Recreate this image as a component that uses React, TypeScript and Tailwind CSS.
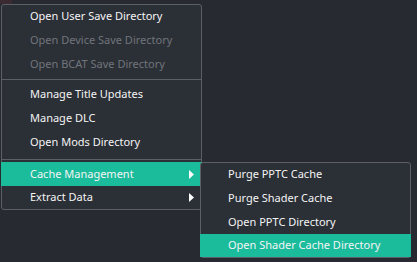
const font = { fontFamily: '"Noto Sans", "Open Sans", sans-serif' };

type Item = { label: string; disabled?: boolean; sub?: boolean; active?: boolean; h?: string };

const groups: { items: Item[]; sep?: string }[] = [
  {
    items: [
      { label: 'Open User Save Directory', h: 'h-[23px]' },
      { label: 'Open Device Save Directory', disabled: true },
      { label: 'Open BCAT Save Directory', disabled: true },
    ],
    sep: 'h-[6px] pt-[3px]',
  },
  {
    items: [{ label: 'Manage Title Updates' }, { label: 'Manage DLC' }, { label: 'Open Mods Directory' }],
    sep: 'h-[8px] pt-[5px]',
  },
  {
    items: [
      { label: 'Cache Management', sub: true, active: true },
      { label: 'Extract Data', sub: true, h: 'h-[23px]' },
    ],
  },
];

const subItems: Item[] = [
  { label: 'Purge PPTC Cache', h: 'h-[23px]' },
  { label: 'Purge Shader Cache' },
  { label: 'Open PPTC Directory' },
  { label: 'Open Shader Cache Directory', active: true, h: 'h-[23px]' },
];

const Arrow = () => (
  <svg width="5" height="9" viewBox="0 0 5 9" className="ml-auto mr-[8px]">
    <path d="M0 0 L5 4.5 L0 9 Z" fill="#ffffff" />
  </svg>
);

const SubMenu = () => (
  <div className="absolute left-[199px] top-0 z-10 w-[211px] h-[96px] bg-[#2b2f36] border border-[#5c6066] rounded-[3px] flex flex-col">
    {subItems.map((item) => (
      <Row key={item.label} item={item} pad="pl-[28px]" />
    ))}
  </div>
);

function Row({ item, pad }: { item: Item; pad: string }) {
  return (
    <div
      className={`relative -mx-px ${item.h ?? 'h-[24px]'} flex items-center ${pad} ${
        item.active ? 'bg-[#1abc9c]' : ''
      } ${item.disabled ? 'text-[#71757b]' : 'text-[#f4f4f4]'}`}
    >
      <span>{item.label}</span>
      {item.sub && <Arrow />}
      {item.active && item.sub && <SubMenu />}
    </div>
  );
}

export default function App() {
  return (
    <div className="relative w-[417px] h-[262px] bg-[#272b31] overflow-hidden text-[11px] pt-[4px] pl-[1px]" style={font}>
      {/* bit of the game icon behind the menu */}
      <div className="absolute left-0 top-0 w-[12px] h-[4px] bg-[#3b2a31]" />

      <div className="relative w-[201px] h-[206px] bg-[#2b2f36] border border-[#5c6066] rounded-[3px] flex flex-col">
        {groups.map((g, gi) => (
          <div key={gi}>
            {g.items.map((item) => (
              <Row key={item.label} item={item} pad="pl-[29px]" />
            ))}
            {g.sep && (
              <div className={g.sep}>
                <div className="h-px w-full bg-[#5c6066]" />
              </div>
            )}
          </div>
        ))}
      </div>
    </div>
  );
}
